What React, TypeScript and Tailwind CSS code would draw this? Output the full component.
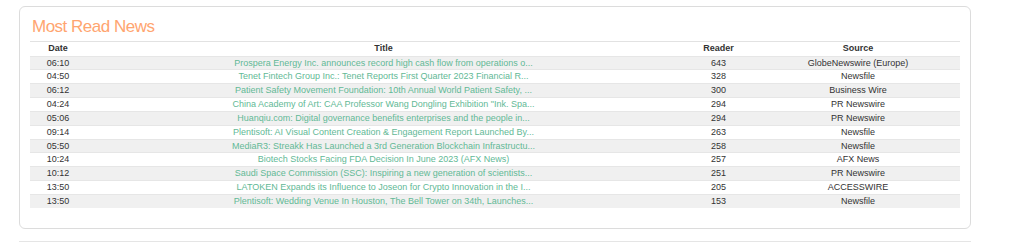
import React from "react";

const rows: [string, string, string, string][] = [
  ["06:10", "Prospera Energy Inc. announces record high cash flow from operations o...", "643", "GlobeNewswire (Europe)"],
  ["04:50", "Tenet Fintech Group Inc.: Tenet Reports First Quarter 2023 Financial R...", "328", "Newsfile"],
  ["06:12", "Patient Safety Movement Foundation: 10th Annual World Patient Safety, ...", "300", "Business Wire"],
  ["04:24", "China Academy of Art: CAA Professor Wang Dongling Exhibition \"Ink. Spa...", "294", "PR Newswire"],
  ["05:06", "Huanqiu.com: Digital governance benefits enterprises and the people in...", "294", "PR Newswire"],
  ["09:14", "Plentisoft: AI Visual Content Creation & Engagement Report Launched By...", "263", "Newsfile"],
  ["05:50", "MediaR3: Streakk Has Launched a 3rd Generation Blockchain Infrastructu...", "258", "Newsfile"],
  ["10:24", "Biotech Stocks Facing FDA Decision In June 2023 (AFX News)", "257", "AFX News"],
  ["10:12", "Saudi Space Commission (SSC): Inspiring a new generation of scientists...", "251", "PR Newswire"],
  ["13:50", "LATOKEN Expands its Influence to Joseon for Crypto Innovation in the I...", "205", "ACCESSWIRE"],
  ["13:50", "Plentisoft: Wedding Venue In Houston, The Bell Tower on 34th, Launches...", "153", "Newsfile"],
];

export default function App() {
  return (
    <div className="w-[1024px] h-[247px] bg-white overflow-hidden" style={{ fontFamily: '"Liberation Sans", Arial, sans-serif' }}>
      <div className="ml-[19px] mt-[6px] w-[952px] h-[223px] border border-[#dcdcdc] rounded-[6px] px-[10px] pt-[10px]">
        <div className="text-[17px] leading-[20px] tracking-[-0.5px] text-[#ffa570] mb-[4px] pl-[2px]">Most Read News</div>
        <table className="w-[930px] border-collapse table-fixed text-[9px] text-[#333]">
          <colgroup>
            <col className="w-[56px]" />
            <col className="w-[595px]" />
            <col className="w-[75px]" />
            <col className="w-[204px]" />
          </colgroup>
          <thead>
            <tr className="border-t border-[#e2e2e2] h-[14.5px]">
              <th className="font-bold text-center leading-[13px] p-0">Date</th>
              <th className="font-bold text-center leading-[13px] p-0">Title</th>
              <th className="font-bold text-center leading-[13px] p-0">Reader</th>
              <th className="font-bold text-center leading-[13px] p-0">Source</th>
            </tr>
          </thead>
          <tbody>
            {rows.map((r, i) => (
              <tr key={i} className={`border-t border-[#e6e6e6] h-[13.84px] ${i % 2 === 0 ? "bg-[#f0f0f0]" : "bg-white"}`}>
                <td className="text-center p-0 leading-[12.84px]">{r[0]}</td>
                <td className="text-center p-0 leading-[12.84px] text-[#62b996] whitespace-nowrap overflow-hidden">{r[1]}</td>
                <td className="text-center p-0 leading-[12.84px]">{r[2]}</td>
                <td className="text-center p-0 leading-[12.84px]">{r[3]}</td>
              </tr>
            ))}
          </tbody>
        </table>
      </div>
      <div className="ml-[19px] mt-[12px] w-[952px] border-t border-[#e5e5e5]" />
    </div>
  );
}
